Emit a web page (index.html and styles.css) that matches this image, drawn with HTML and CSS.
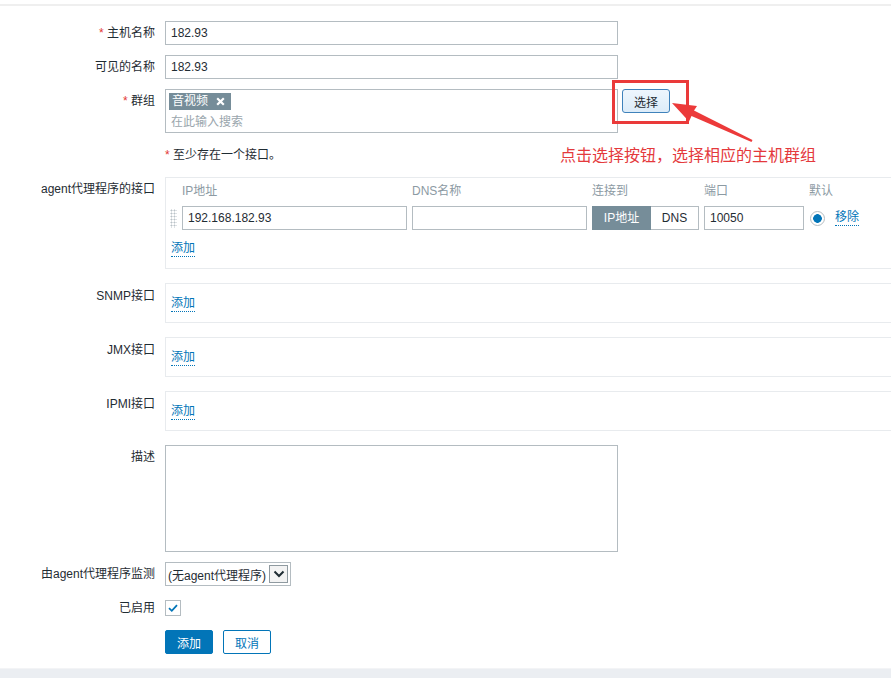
FILE: index.html
```html
<!DOCTYPE html>
<html lang="zh-CN">
<head>
<meta charset="utf-8">
<title>主机</title>
<link rel="stylesheet" href="styles.css">
</head>
<body>
<div class="topline"></div>
<main class="form">
  <div class="row">
    <div class="lbl"><span class="req">*</span> 主机名称</div>
    <div class="text w452">182.93</div>
  </div>
  <div class="row">
    <div class="lbl">可见的名称</div>
    <div class="text w452">182.93</div>
  </div>
  <div class="row">
    <div class="lbl"><span class="req">*</span> 群组</div>
    <div class="multi">
      <span class="tag">音视频<svg class="tag-x" width="9" height="9" viewBox="0 0 9 9"><path d="M1.2 1.2 L7.8 7.8 M7.8 1.2 L1.2 7.8" stroke="#fff" stroke-width="2.2"/></svg></span>
      <span class="ph">在此输入搜索</span>
    </div>
    <button class="pick">选择</button>
  </div>
  <div class="row">
    <div class="lbl"></div>
    <div class="note"><span class="req">*</span> 至少存在一个接口。</div>
  </div>
  <div class="row box-row">
    <div class="lbl">agent代理程序的接口</div>
    <div class="ibox agent">
      <div class="igrid">
        <span></span>
        <span class="th">IP地址</span>
        <span class="th">DNS名称</span>
        <span class="th">连接到</span>
        <span class="th">端口</span>
        <span class="th">默认</span>
        <span class="handle"></span>
        <div class="text">192.168.182.93</div>
        <div class="text"></div>
        <div class="toggle"><span class="on">IP地址</span><span class="off">DNS</span></div>
        <div class="text">10050</div>
        <div class="defcell"><span class="radio"></span><a class="link">移除</a></div>
      </div>
      <a class="link add">添加</a>
    </div>
  </div>
  <div class="row box-row">
    <div class="lbl lbl-box">SNMP接口</div>
    <div class="ibox"><a class="link">添加</a></div>
  </div>
  <div class="row box-row">
    <div class="lbl lbl-box">JMX接口</div>
    <div class="ibox"><a class="link">添加</a></div>
  </div>
  <div class="row box-row">
    <div class="lbl lbl-box">IPMI接口</div>
    <div class="ibox"><a class="link">添加</a></div>
  </div>
  <div class="row">
    <div class="lbl">描述</div>
    <div class="area"></div>
  </div>
  <div class="row">
    <div class="lbl">由agent代理程序监测</div>
    <div class="select"><span>(无agent代理程序)</span><span class="sel-btn"><svg width="12" height="8" viewBox="0 0 12 8"><path d="M1.5 1.5 L6 6 L10.5 1.5" fill="none" stroke="#1f2c33" stroke-width="2"/></svg></span></div>
  </div>
  <div class="row">
    <div class="lbl">已启用</div>
    <div class="check-wrap"><span class="check"><svg width="12" height="10" viewBox="0 0 12 10"><path d="M2 5.2 L4.8 7.8 L10 2.2" fill="none" stroke="#0275b8" stroke-width="1.8"/></svg></span></div>
  </div>
  <div class="row">
    <div class="lbl"></div>
    <div class="buttons"><button class="btn primary">添加</button><button class="btn secondary">取消</button></div>
  </div>
</main>
<div class="band"></div>

<div class="anno-box"></div>
<svg class="anno-arrow" width="891" height="678" viewBox="0 0 891 678">
  <polygon points="672,103 697,106 694,110.5 752.5,140 751.5,142 691.5,116 689,121.5" fill="#ec3a3a"/>
</svg>
<div class="anno-text">点击选择按钮，选择相应的主机群组</div>
</body>
</html>
```

FILE: styles.css
```css
html, body {
  margin: 0;
  padding: 0;
  overflow: hidden;
  background: #ffffff;
}
body {
  font-family: "Liberation Sans", Arial, "Noto Sans CJK SC", sans-serif;
  font-size: 12px;
  color: #1f2c33;
  width: 891px;
  height: 678px;
  position: relative;
}
.topline {
  margin-top: 4px;
  height: 2px;
  background: #efefef;
}
.form {
  padding-top: 15px;
  display: flex;
  flex-direction: column;
  gap: 10px;
}
.row {
  display: flex;
  align-items: flex-start;
}
.box-row {
  margin-bottom: 4px;
}
.lbl {
  flex: none;
  width: 155px;
  margin-right: 10px;
  text-align: right;
  line-height: 24px;
  white-space: nowrap;
}
.lbl-box {
  padding-top: 1px;
}
.req {
  color: #e33734;
}
.text {
  box-sizing: border-box;
  height: 24px;
  border: 1px solid #b4bcc1;
  background: #fff;
  padding: 0 5px;
  line-height: 22px;
  white-space: nowrap;
  overflow: hidden;
}
.w452 {
  width: 453px;
}
.multi {
  box-sizing: border-box;
  width: 453px;
  height: 44px;
  border: 1px solid #b4bcc1;
  padding: 3px 3px 0;
  display: flex;
  flex-direction: column;
  align-items: flex-start;
}
.tag {
  background: #768d99;
  color: #fff;
  height: 17px;
  line-height: 17px;
  padding: 0 6px 0 3px;
  display: inline-flex;
  align-items: center;
  gap: 8px;
}
.ph {
  color: #9aa6ad;
  line-height: 18px;
  margin-top: 3px;
  padding-left: 2px;
}
.pick {
  margin-left: 4px;
  width: 48px;
  height: 24px;
  box-sizing: border-box;
  border: 1px solid #3f82bb;
  border-radius: 3px;
  background: linear-gradient(#eef6fd, #dcecf9);
  font-family: inherit;
  font-size: 12px;
  color: #1f2c33;
  padding: 0;
}
.note {
  line-height: 24px;
}
.ibox {
  box-sizing: border-box;
  width: 726px;
  border: 1px solid #e8ebee;
  border-right: none;
  padding: 12px 5px 10px 5px;
  flex: none;
}
.ibox.agent {
  padding: 3px 4px 11px 4px;
}
.igrid {
  display: grid;
  grid-template-columns: 7px 225px 175px 107px 100px auto;
  grid-template-rows: 20px 24px;
  column-gap: 5px;
  row-gap: 5px;
  align-items: center;
}
.th {
  color: #8c9aa3;
  line-height: 20px;
}
.handle {
  height: 19px;
  width: 7px;
  align-self: center;
  background-image: radial-gradient(circle, #b9c2c7 0.9px, transparent 1.1px);
  background-size: 3px 3px;
  background-position: 0 0;
}
.toggle {
  display: flex;
  height: 24px;
}
.toggle span {
  box-sizing: border-box;
  height: 24px;
  line-height: 22px;
  text-align: center;
}
.toggle .on {
  width: 59px;
  background: #768d99;
  color: #fff;
  border: 1px solid #768d99;
}
.toggle .off {
  width: 48px;
  border: 1px solid #b4bcc1;
  border-left: none;
  background: #fff;
}
.defcell {
  display: flex;
  align-items: center;
  gap: 10px;
  padding-left: 1px;
}
.radio {
  box-sizing: border-box;
  width: 15px;
  height: 15px;
  border-radius: 50%;
  border: 1px solid #b4bcc1;
  background: radial-gradient(circle, #0275b8 0, #0275b8 4px, #fff 4.6px);
}
.link {
  color: #0275b8;
  border-bottom: 1px dotted #0275b8;
  line-height: 15px;
  display: inline-block;
  cursor: pointer;
}
.add {
  margin-top: 11px;
  margin-left: 1px;
}
.area {
  box-sizing: border-box;
  width: 453px;
  height: 107px;
  border: 1px solid #b4bcc1;
}
.select {
  box-sizing: border-box;
  width: 126px;
  height: 24px;
  border: 1px solid #b4bcc1;
  display: flex;
  align-items: center;
  justify-content: space-between;
  padding: 0 2px 0 2px;
  white-space: nowrap;
}
.sel-btn {
  box-sizing: border-box;
  width: 19px;
  height: 18px;
  border: 1px solid #8f9aa0;
  background: #f3f3f3;
  display: flex;
  align-items: center;
  justify-content: center;
}
.check-wrap {
  height: 24px;
  display: flex;
  align-items: center;
}
.check {
  box-sizing: border-box;
  width: 16px;
  height: 16px;
  border: 1px solid #b4bcc1;
  display: flex;
  align-items: center;
  justify-content: center;
}
.buttons {
  display: flex;
  gap: 10px;
}
.btn {
  box-sizing: border-box;
  width: 48px;
  height: 24px;
  font-family: inherit;
  font-size: 12px;
  border-radius: 2px;
  padding: 0;
}
.primary {
  background: #0275b8;
  border: 1px solid #0275b8;
  color: #fff;
}
.secondary {
  background: #fff;
  border: 1px solid #0275b8;
  color: #0275b8;
}
.band {
  position: absolute;
  left: 0;
  right: 0;
  bottom: 0;
  height: 9px;
  background: #ebeef2;
  border-top: 1px solid #f3f4f6;
}
.anno-box {
  position: absolute;
  left: 612px;
  top: 80px;
  width: 77px;
  height: 44px;
  box-sizing: border-box;
  border: 3px solid #ea3a3a;
}
.anno-arrow {
  position: absolute;
  left: 0;
  top: 0;
  pointer-events: none;
}
.anno-text {
  position: absolute;
  left: 560px;
  top: 144px;
  font-size: 16px;
  line-height: 20px;
  color: #e4393c;
  white-space: nowrap;
  font-family: "Noto Sans CJK SC", sans-serif;
}
```
